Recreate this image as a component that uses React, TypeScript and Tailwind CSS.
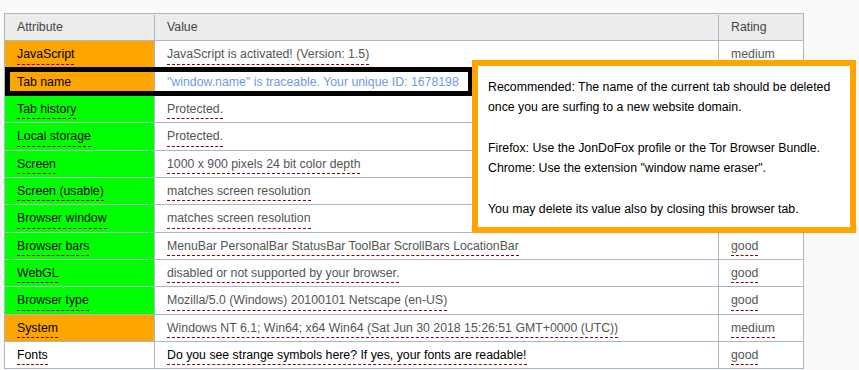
import React from "react";

type Row = {
  attr: string;
  value: string;
  rating: string;
  tone: "orange" | "green" | "white";
  valueClass?: string;
};

// ratings behind the popup are left blank
const rows: Row[] = [
  { attr: "JavaScript", value: "JavaScript is activated! (Version: 1.5)", rating: "medium", tone: "orange" },
  { attr: "Tab name", value: "\"window.name\" is traceable. Your unique ID: 1678198", rating: "", tone: "orange", valueClass: "text-[#6f9be0]" },
  { attr: "Tab history", value: "Protected.", rating: "", tone: "green" },
  { attr: "Local storage", value: "Protected.", rating: "", tone: "green" },
  { attr: "Screen", value: "1000 x 900 pixels 24 bit color depth", rating: "", tone: "green" },
  { attr: "Screen (usable)", value: "matches screen resolution", rating: "", tone: "green" },
  { attr: "Browser window", value: "matches screen resolution", rating: "", tone: "green" },
  { attr: "Browser bars", value: "MenuBar PersonalBar StatusBar ToolBar ScrollBars LocationBar", rating: "good", tone: "green" },
  { attr: "WebGL", value: "disabled or not supported by your browser.", rating: "good", tone: "green" },
  { attr: "Browser type", value: "Mozilla/5.0 (Windows) 20100101 Netscape (en-US)", rating: "good", tone: "green" },
  { attr: "System", value: "Windows NT 6.1; Win64; x64 Win64 (Sat Jun 30 2018 15:26:51 GMT+0000 (UTC))", rating: "medium", tone: "orange" },
  { attr: "Fonts", value: "Do you see strange symbols here? If yes, your fonts are readable!", rating: "good", tone: "white", valueClass: "text-black" },
];

const toneBg = {
  orange: "bg-[#ffa500]",
  green: "bg-[#00ff00]",
  white: "bg-white",
};

function Dashed({ children, className = "" }: { children: React.ReactNode; className?: string }) {
  return <span className={`border-b border-dashed border-[#8b0000] ${className}`}>{children}</span>;
}

export default function App() {
  return (
    <div
      className="relative min-h-[370px] w-[859px] bg-[#fafafa] pl-[4px] pt-[13px] text-[12.3px]"
      style={{ fontFamily: '"Liberation Sans", Arial, sans-serif' }}
    >
      <div className="w-[800px] border-x border-t border-[#a9b7c6] bg-white">
        <div className="flex h-[27.33px] border-b border-[#a9b7c6] bg-[#ececec] pt-px text-[#444]">
          <div className="flex w-[150px] items-center border-r border-[#a9b7c6] pl-[12px]">Attribute</div>
          <div className="flex w-[564px] items-center border-r border-[#a9b7c6] pl-[12px]">Value</div>
          <div className="flex flex-1 items-center pl-[12px]">Rating</div>
        </div>
        {rows.map((r) => (
          <div key={r.attr} className="flex h-[27.33px] border-b border-[#a9b7c6]">
            <div className={`flex w-[150px] items-center border-r border-[#a9b7c6] pl-[12px] pt-px text-black ${toneBg[r.tone]}`}>
              <Dashed>{r.attr}</Dashed>
            </div>
            <div className={`flex w-[564px] items-center border-r border-[#a9b7c6] pl-[12px] pt-px ${r.valueClass ?? "text-[#555]"}`}>
              <Dashed>{r.value}</Dashed>
            </div>
            <div className="flex flex-1 items-center pl-[12px] pt-px text-[#555]">
              {r.rating && <Dashed>{r.rating}</Dashed>}
            </div>
          </div>
        ))}
      </div>

      {/* highlighted row */}
      <div className="absolute left-[5px] top-[67px] h-[29px] w-[468px] border-[5px] border-black" />

      {/* hint popup */}
      <div className="absolute left-[472px] top-[60px] h-[173px] w-[384px] border-[6px] border-[#ffa500] bg-white pl-[10px] pt-[11px] leading-[20.3px] text-black">
        <p>Recommended: The name of the current tab should be deleted</p>
        <p>once you are surfing to a new website domain.</p>
        <p>&nbsp;</p>
        <p>Firefox: Use the JonDoFox profile or the Tor Browser Bundle.</p>
        <p>Chrome: Use the extension "window name eraser".</p>
        <p>&nbsp;</p>
        <p>You may delete its value also by closing this browser tab.</p>
      </div>
    </div>
  );
}
